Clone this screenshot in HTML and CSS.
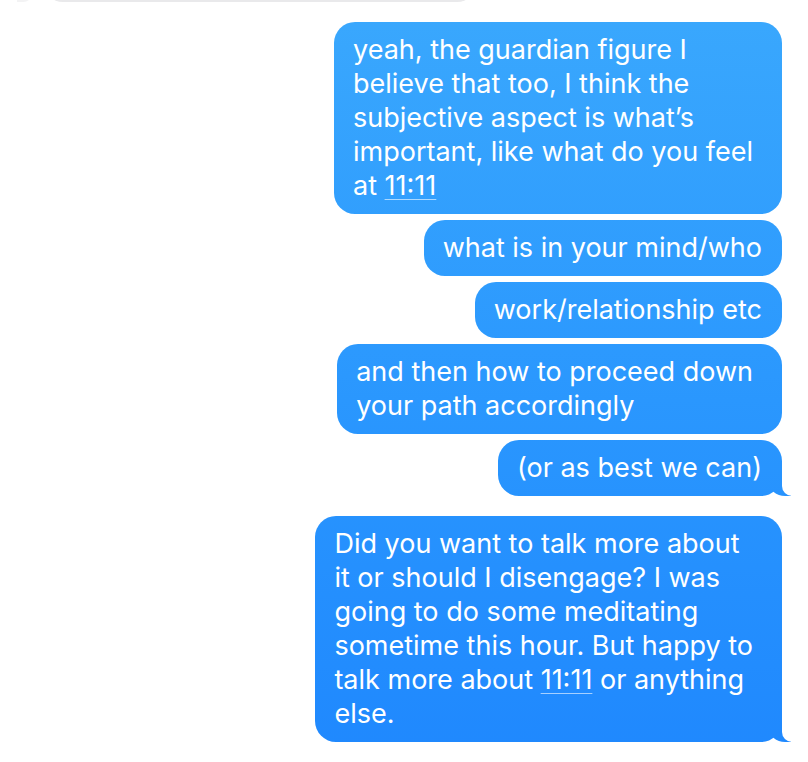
FILE: index.html
```html
<!DOCTYPE html>
<html lang="en">
  <head>
    <meta charset="UTF-8" />
    <meta name="viewport" content="width=device-width, initial-scale=1.0" />
    <title>Messages</title>
    <link rel="stylesheet" href="styles.css">
  </head>
  <body>
    <div class="thread">
      <div class="bubble incoming"></div>

      <div class="bubble outgoing multi first">
        yeah, the guardian figure I<br />
        believe that too, I think the<br />
        subjective aspect is what’s<br />
        important, like what do you feel<br />
        at <span class="link">11:11</span>
      </div>
      <div class="bubble outgoing">what is in your mind/who</div>
      <div class="bubble outgoing">work/relationship etc</div>
      <div class="bubble outgoing multi">
        and then how to proceed down<br />
        your path accordingly
      </div>
      <div class="bubble outgoing tail">(or as best we can)</div>

      <div class="bubble outgoing multi tail group">
        Did you want to talk more about<br />
        it or should I disengage? I was<br />
        going to do some meditating<br />
        sometime this hour. But happy to<br />
        talk more about <span class="link">11:11</span> or anything<br />
        else.
      </div>
    </div>
  </body>
</html>
```

FILE: styles.css
```css
body {
  font-family: Inter, "Noto Sans", sans-serif;
  background-color: #ffffff;
  margin: 0;
  padding: 0;
  overflow: hidden;
}
.thread {
  display: flex;
  flex-direction: column;
  align-items: flex-end;
  padding: 0 26px 0 0;
}
.bubble {
  position: relative;
  box-sizing: border-box;
  border-radius: 21px;
  font-size: 27px;
  line-height: 34px;
  padding: 11px 20px 11px 19px;
  margin-top: 6px;
}
.multi {
  padding-right: 29px;
}
.outgoing {
  color: white;
  background: linear-gradient(to bottom, #3aa8fd 0px, #2a97fe 400px, #1f88fe 762px);
  background-attachment: fixed;
}
.incoming {
  align-self: flex-start;
  width: 434px;
  height: 40px;
  margin: -38px 0 0 43px;
  padding: 0;
  background-color: #e9e9eb;
}
.incoming::before {
  content: "";
  position: absolute;
  bottom: 0;
  left: -26px;
  width: 16px;
  height: 10px;
  border-bottom-right-radius: 10px;
  background-color: #f3f3f4;
}
.first {
  margin-top: 20px;
}
.group {
  margin-top: 20px;
}
.link {
  text-decoration: underline;
  text-decoration-color: rgba(255, 255, 255, 0.6);
  text-decoration-thickness: 1px;
  text-underline-offset: 4px;
}
/* little curl at the bottom right of the last bubble in a group */
.tail::before {
  content: "";
  position: absolute;
  bottom: 0;
  right: -9px;
  width: 22px;
  height: 22px;
  background: linear-gradient(to bottom, #3aa8fd 0px, #2a97fe 400px, #1f88fe 762px);
  background-attachment: fixed;
  border-bottom-left-radius: 16px 14px;
}
.tail::after {
  content: "";
  position: absolute;
  bottom: 0;
  right: -12px;
  width: 12px;
  height: 22px;
  background-color: #ffffff;
  border-bottom-left-radius: 10px;
}
```
